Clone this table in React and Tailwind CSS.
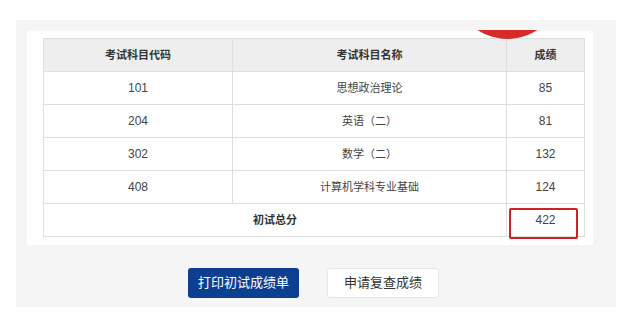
const rows = [
  { code: '101', name: '思想政治理论', score: '85' },
  { code: '204', name: '英语（二）', score: '81' },
  { code: '302', name: '数学（二）', score: '132' },
  { code: '408', name: '计算机学科专业基础', score: '124' },
]

const cell = 'border border-[#dedede] h-[33px] text-center align-middle'

const App = () => {
  return (
    <div
      className="w-[640px] h-[327px] bg-white overflow-hidden pt-[20px] pl-[16px]"
      style={{ fontFamily: '"Liberation Sans", "Noto Sans CJK SC", sans-serif' }}
    >
      <div className="relative w-[600px] h-[287px] bg-[#f5f5f5] pt-[11px] pl-[11px]">
        <div className="relative w-[566px] h-[214px] bg-white pt-[7px] pl-[16px]">
          <table className="w-[541px] border-collapse table-fixed text-[#444]">
            <colgroup>
              <col className="w-[189px]" />
              <col className="w-[274px]" />
              <col className="w-[78px]" />
            </colgroup>
            <thead>
              <tr className="bg-[#eeeeee] text-[11px] font-bold text-[#333]">
                <th className={cell}>考试科目代码</th>
                <th className={cell}>考试科目名称</th>
                <th className={cell}>成绩</th>
              </tr>
            </thead>
            <tbody className="text-[11px]">
              {rows.map((r) => (
                <tr key={r.code}>
                  <td className={`${cell} text-[12px]`}>{r.code}</td>
                  <td className={cell}>{r.name}</td>
                  <td className={`${cell} text-[12px]`}>{r.score}</td>
                </tr>
              ))}
              <tr>
                <td colSpan={2} className={`${cell} font-bold text-[#333]`}>初试总分</td>
                <td className={`${cell} relative text-[12px]`}>
                  422
                  <div className="absolute left-[2px] top-[4px] w-[69px] h-[31px] border-2 border-[#cc2222] rounded-[2px]" />
                </td>
              </tr>
            </tbody>
          </table>
          {/* red stamp edge peeking in at the top */}
          <div className="absolute left-[450px] top-[-1px] w-[60px] h-[10px] overflow-hidden">
            <div className="absolute left-[-24px] top-[-100px] w-[109px] h-[109px] rounded-full bg-[#d62b26]" />
          </div>
        </div>
        <div className="flex justify-center gap-[28px] mt-[23px] pr-[16px]">
          <button className="w-[111px] h-[30px] bg-[#0d3f91] text-white text-[13px] rounded-[3px]">
            打印初试成绩单
          </button>
          <button className="w-[112px] h-[30px] bg-white border border-[#e6e6e6] text-[#333] text-[13px] rounded-[3px]">
            申请复查成绩
          </button>
        </div>
      </div>
    </div>
  )
}

export default App
